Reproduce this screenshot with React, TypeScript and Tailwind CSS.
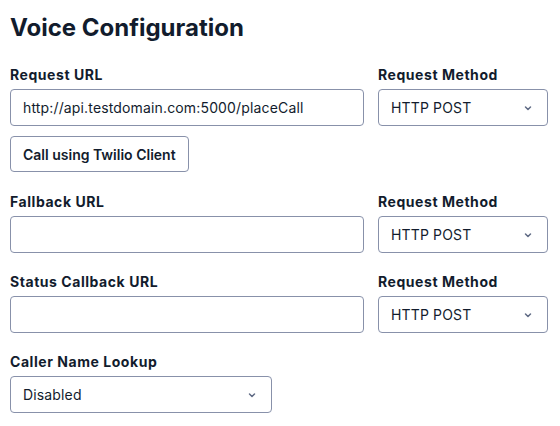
import React from "react";

const Chevron = () => (
  <svg width="10" height="10" viewBox="0 0 20 20" fill="none" className="absolute right-[14px] top-1/2 -translate-y-1/2">
    <path d="M5 8l5 5 5-5" stroke="#606b85" strokeWidth="3" strokeLinecap="round" strokeLinejoin="round" />
  </svg>
);

const Label = ({ children }: { children: React.ReactNode }) => (
  <div className="text-[14px] leading-[20px] font-bold tracking-[0.55px] text-[#121c2d] mb-[4px]">{children}</div>
);

const Input = ({ value, w }: { value?: string; w: string }) => (
  <div className={`${w} h-[37px] rounded-[4px] border border-[#8891aa] bg-white flex items-center px-[12px] text-[14px] tracking-[0.15px] text-[#121c2d]`}>
    {value}
  </div>
);

const Select = ({ value, w }: { value: string; w: string }) => (
  <div className={`${w} relative h-[37px] rounded-[4px] border border-[#8891aa] bg-white flex items-center px-[12px] text-[14px] tracking-[0.15px] text-[#121c2d]`}>
    {value}
    <Chevron />
  </div>
);

const Row = ({ label, value }: { label: string; value?: string }) => (
  <div className="flex gap-[14px]">
    <div>
      <Label>{label}</Label>
      <Input value={value} w="w-[354px]" />
    </div>
    <div>
      <Label>Request Method</Label>
      <Select value="HTTP POST" w="w-[170px]" />
    </div>
  </div>
);

export default function App() {
  return (
    <div className="bg-white min-h-[426px] pl-[10px] pt-[12px]" style={{ fontFamily: "Inter, 'Noto Sans', sans-serif" }}>
      <h1 className="text-[24px] leading-[32px] font-bold text-[#121c2d] mb-[21px]">Voice Configuration</h1>
      <Row label="Request URL" value="http://api.testdomain.com:5000/placeCall" />
      <button className="mt-[10px] h-[36px] px-[12px] rounded-[4px] border border-[#8891aa] bg-white text-[14px] font-semibold text-[#121c2d]">
        Call using Twilio Client
      </button>
      <div className="mt-[20px]">
        <Row label="Fallback URL" />
      </div>
      <div className="mt-[19px]">
        <Row label="Status Callback URL" />
      </div>
      <div className="mt-[19px]">
        <Label>Caller Name Lookup</Label>
        <Select value="Disabled" w="w-[262px]" />
      </div>
    </div>
  );
}
